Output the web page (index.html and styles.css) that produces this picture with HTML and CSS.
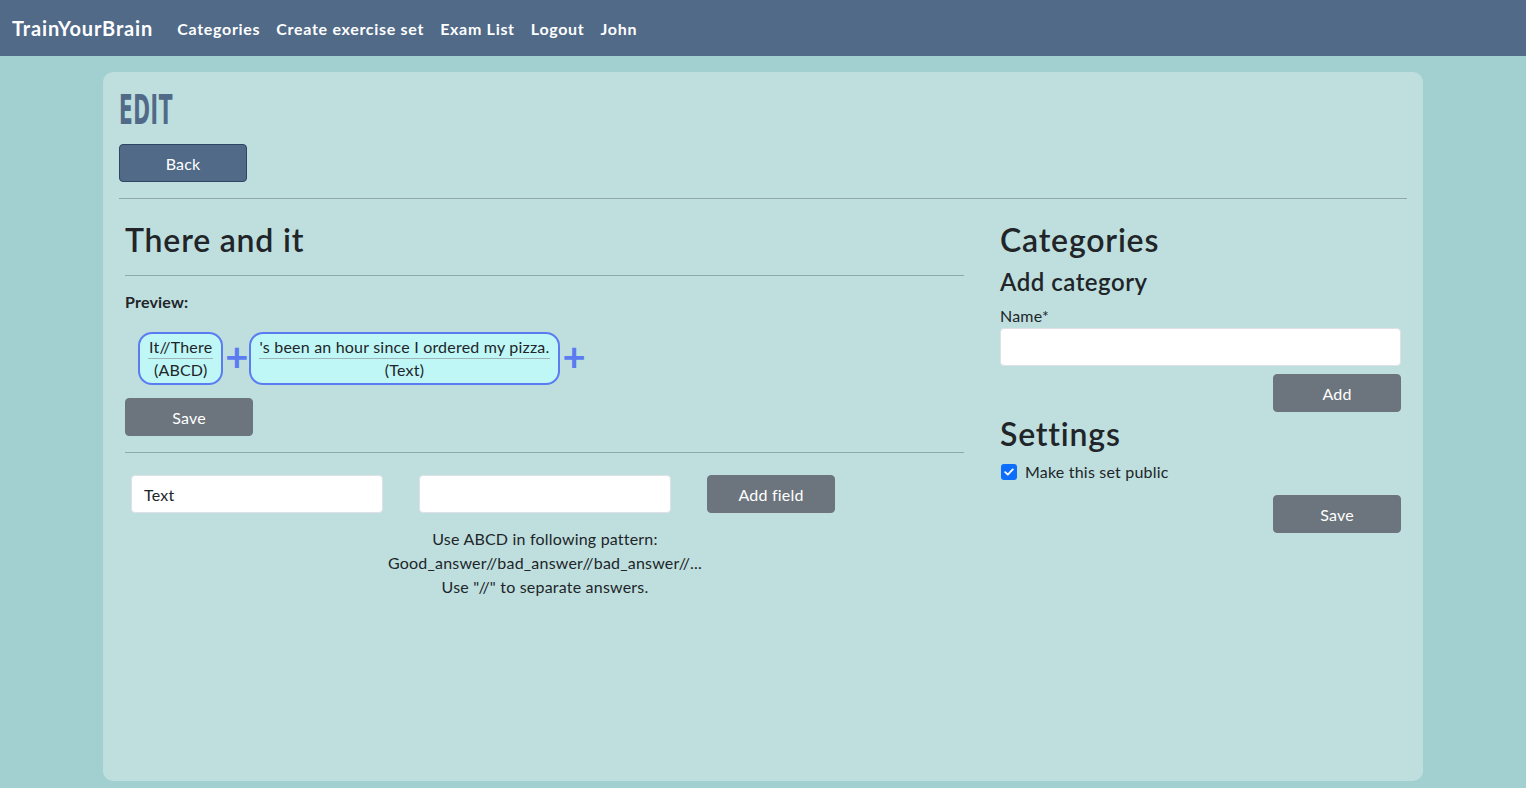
FILE: index.html
```html
<!DOCTYPE html>
<html lang="en">
<head>
<meta charset="utf-8">
<title>TrainYourBrain - Edit</title>
<link rel="stylesheet" href="styles.css">
</head>
<body>
<nav class="navbar">
  <a class="brand" href="#">TrainYourBrain</a>
  <a class="nav-link" href="#">Categories</a>
  <a class="nav-link" href="#">Create exercise set</a>
  <a class="nav-link" href="#">Exam List</a>
  <a class="nav-link" href="#">Logout</a>
  <a class="nav-link" href="#">John</a>
</nav>
<main class="page">
  <section class="card">
    <h1 class="title">EDIT</h1>
    <button class="btn btn-primary btn-back">Back</button>
    <hr class="rule rule-top">
    <div class="columns">
      <div class="col-left">
        <h2 class="h2">There and it</h2>
        <hr class="rule">
        <div class="preview-label">Preview:</div>
        <div class="preview">
          <div class="pill">
            <div class="pill-top">It//There</div>
            <div class="pill-bottom">(ABCD)</div>
          </div>
          <span class="plus">+</span>
          <div class="pill">
            <div class="pill-top">'s been an hour since I ordered my pizza.</div>
            <div class="pill-bottom">(Text)</div>
          </div>
          <span class="plus">+</span>
        </div>
        <button class="btn btn-secondary">Save</button>
        <hr class="rule rule-second">
        <div class="field-row">
          <input class="input input-field" type="text" value="Text">
          <div class="field-col">
            <input class="input input-field" type="text">
            <p class="help">Use ABCD in following pattern:<br>Good_answer//bad_answer//bad_answer//...<br>Use "//" to separate answers.</p>
          </div>
          <button class="btn btn-secondary">Add field</button>
        </div>
      </div>
      <div class="col-right">
        <h2 class="h2">Categories</h2>
        <h3 class="h3">Add category</h3>
        <label class="label" for="cat">Name*</label>
        <input id="cat" class="input input-full" type="text">
        <div class="right-actions">
          <button class="btn btn-secondary">Add</button>
        </div>
        <h2 class="h2 settings">Settings</h2>
        <label class="check">
          <span class="checkbox"><svg width="10" height="8" viewBox="0 0 10 8"><path d="M1.2 4.2 L3.8 6.6 L8.8 1.4" fill="none" stroke="#fff" stroke-width="1.8" stroke-linecap="round" stroke-linejoin="round"/></svg></span>
          Make this set public
        </label>
        <div class="right-actions save-actions">
          <button class="btn btn-secondary">Save</button>
        </div>
      </div>
    </div>
  </section>
</main>
</body>
</html>
```
FILE: styles.css
```css
* { box-sizing: border-box; }
html, body { margin: 0; padding: 0; }
body {
  background: #a2cfd0;
  font-family: Lato, "Open Sans", "Noto Sans", sans-serif;
  font-size: 16px;
  letter-spacing: 0.2px;
  color: #212529;
  height: 788px;
  overflow: hidden;
}
.navbar {
  height: 56px;
  background: #506a88;
  display: flex;
  align-items: center;
  padding-left: 12px;
}
.navbar a { color: #fff; text-decoration: none; font-weight: 700; }
.brand { font-size: 20px; margin-right: 24px; letter-spacing: 0.85px; }
.nav-link { font-size: 16px; margin-right: 16px; letter-spacing: 0.7px; }
.page { padding: 16px 103px 0 103px; }
.card {
  background: #bedfde;
  border-radius: 10px;
  height: 709px;
  padding: 14px 16px 16px 16px;
}
.title {
  margin: 0;
  font-family: "Liberation Sans Narrow", "DejaVu Sans Condensed", sans-serif;
  font-weight: 700;
  font-size: 40px;
  line-height: 48px;
  letter-spacing: 1px;
  color: #506a88;
  transform: scaleX(0.56);
  transform-origin: left center;
}
.btn {
  font-family: inherit;
  font-size: 16px;
  letter-spacing: 0.2px;
  color: #fff;
  border: 1px solid transparent;
  border-radius: 4px;
  width: 128px;
  height: 38px;
  padding: 0;
  cursor: pointer;
}
.btn-primary { background: #506a88; border-color: #2f4560; }
.btn-secondary { background: #6c757d; border-color: #6c757d; }
.btn-back { margin-top: 10px; display: block; }
.rule {
  border: 0;
  border-top: 1px solid #8fa8a8;
  margin: 0;
}
.rule-top { margin-top: 16px; }
.columns { display: flex; padding: 0 6px; gap: 36px; }
.col-left { width: 839px; }
.col-right { width: 401px; }
.h2 { font-size: 32px; font-weight: 600; margin: 21px 0 15px; line-height: 40px; letter-spacing: 0.8px; }
.col-right .h2 { margin-bottom: 0; }
.h3 { font-size: 24px; font-weight: 600; margin: 7px 0 8px; line-height: 30px; letter-spacing: 0.5px; }
.preview-label { font-weight: 700; margin-top: 16px; line-height: 20px; }
.preview { display: flex; align-items: center; margin: 20px 0 13px 13px; }
.pill {
  background: #bff7f6;
  border: 2px solid #5b7cf0;
  border-radius: 14px;
  padding: 2px 8px;
  text-align: center;
  line-height: 22px;
}
.pill-top { border-bottom: 1px solid #9db5b6; padding: 0 1px; }
.pill-bottom { padding-top: 0; }
.plus { color: #5b7cf0; font-size: 40px; line-height: 40px; padding: 0 0 0 2px; font-weight: 700; letter-spacing: 0; position: relative; top: -3px; }
.rule-second { margin-top: 16px; }
.field-row { display: flex; gap: 36px; align-items: flex-start; margin-top: 22px; padding-left: 6px; }
.input {
  background: #fff;
  border: 1px solid #dee2e6;
  border-radius: 4px;
  height: 38px;
  font-family: inherit;
  font-size: 16px;
  letter-spacing: 0.2px;
  padding: 6px 12px;
  color: #212529;
}
.input-field { width: 252px; }
.field-col { display: flex; flex-direction: column; align-items: center; width: 252px; }
.help { margin: 14px -60px 0; text-align: center; line-height: 24px; white-space: nowrap; }
.label { display: block; margin-top: 9px; line-height: 20px; }
.input-full { width: 401px; margin-top: 2px; display: block; }
.right-actions { display: flex; justify-content: flex-end; margin-top: 8px; }
.settings { margin-top: 2px; }
.check { display: flex; align-items: center; gap: 8px; margin-top: 6px; line-height: 24px; }
.checkbox {
  width: 16px; height: 16px; border-radius: 3px; background: #0d6efd;
  display: inline-flex; align-items: center; justify-content: center; margin-left: 1px;
}
.save-actions { margin-top: 11px; }
```
